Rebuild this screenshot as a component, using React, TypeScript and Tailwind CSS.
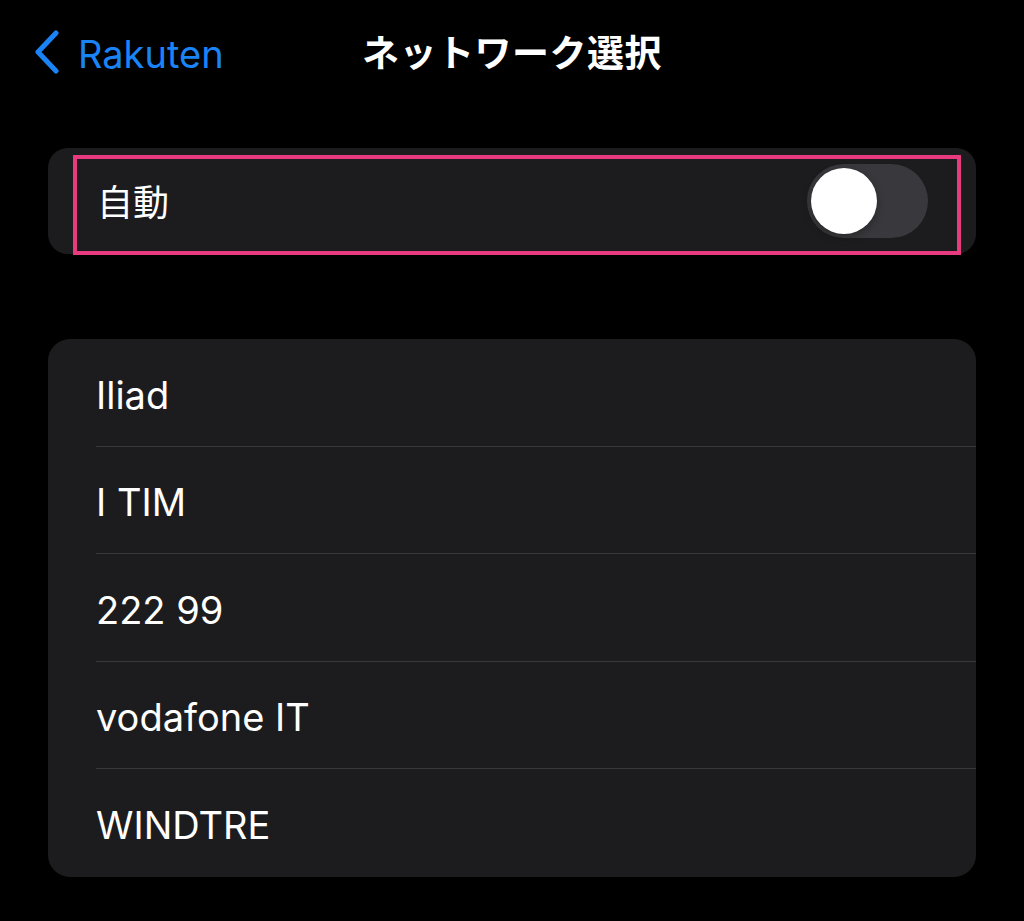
const networks = ['Iliad', 'I TIM', '222 99', 'vodafone IT', 'WINDTRE']

function Toggle() {
  return (
    <div className="w-[121px] h-[74px] rounded-full bg-[#39393d] p-[4px] flex items-center">
      <div className="w-[66px] h-[66px] rounded-full bg-white shadow-[0_3px_8px_rgba(0,0,0,0.3)]" />
    </div>
  )
}

export default function App() {
  return (
    <div
      className="w-[1024px] h-[921px] bg-black text-white overflow-hidden"
      style={{ fontFamily: 'Inter, "Noto Sans CJK JP", sans-serif' }}
    >
      <header className="h-[104px] grid grid-cols-[1fr_auto_1fr] items-center">
        <div className="flex items-center pl-[33px] text-[#1a84f7]">
          <svg width="28" height="44" viewBox="0 0 28 44" fill="none">
            <path d="M23 3 L5 22 L23 41" stroke="currentColor" strokeWidth="5" strokeLinecap="round" strokeLinejoin="round" />
          </svg>
          <span className="ml-[17px] text-[38px] leading-none pt-[3px]">Rakuten</span>
        </div>
        <h1 className="text-[37px] font-bold leading-none tracking-[0.5px] pt-[2px]">ネットワーク選択</h1>
        <div />
      </header>

      <section className="mt-[44px] mx-[48px] relative">
        <div className="h-[106px] rounded-[20px] bg-[#1c1c1e] flex items-center justify-between pl-[49px] pr-[48px]">
          <span className="text-[36px] leading-none pt-[3px]">自動</span>
          <Toggle />
        </div>
        <div className="absolute left-[25px] top-[7px] w-[888px] h-[100px] border-[4px] border-[#e83a7e] pointer-events-none" />
      </section>

      <section className="mt-[85px] mx-[48px] rounded-[22px] bg-[#1c1c1e] overflow-hidden">
        {networks.map((n, i) => (
          <div key={n} className="pl-[48px]">
            <div
              className={`h-[107.5px] flex items-center text-[38px] leading-none pt-[5px] ${
                i < networks.length - 1 ? 'border-b border-[#38383a]' : ''
              }`}
            >
              {n}
            </div>
          </div>
        ))}
      </section>
    </div>
  )
}
